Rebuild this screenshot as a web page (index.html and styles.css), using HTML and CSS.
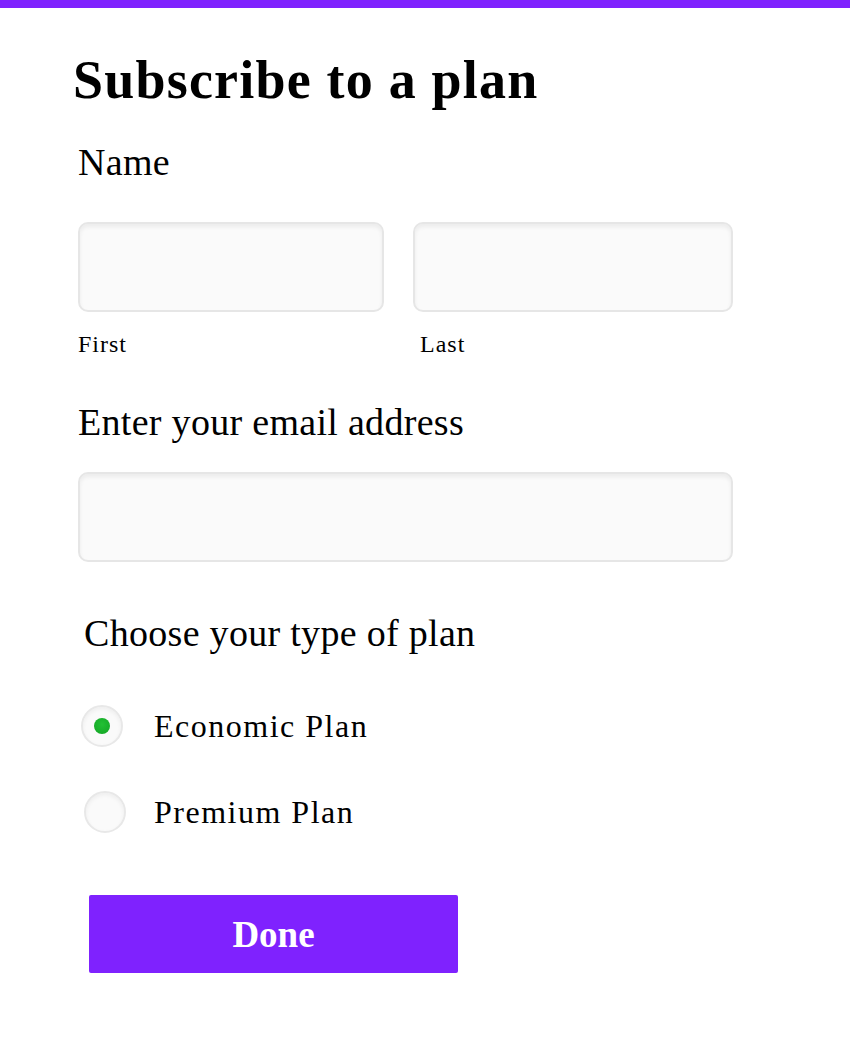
FILE: index.html
```html
<!DOCTYPE html>
<html lang="en">
<head>
	<meta charset="UTF-8">
	<title>Subscribe to a plan</title>
	<link rel="stylesheet" href="styles.css">
</head>
<body>
	<div class="topBar"></div>
	<form class="planForm">
		<h1 class="title">Subscribe to a plan</h1>
		<div class="label">Name</div>
		<div class="nameRow">
			<div class="nameField first">
				<input class="textInput" type="text">
				<span class="subLabel">First</span>
			</div>
			<div class="nameField last">
				<input class="textInput" type="text">
				<span class="subLabel">Last</span>
			</div>
		</div>
		<div class="label emailLabel">Enter your email address</div>
		<input class="textInput emailInput" type="email">

		<div class="label planLabel">Choose your type of plan</div>
		<label class="radioRow">
			<span class="radio checked"></span>
			<span class="radioText">Economic Plan</span>
		</label>
		<label class="radioRow second">
			<span class="radio"></span>
			<span class="radioText">Premium Plan</span>
		</label>

		<button class="doneBtn" type="button">Done</button>
	</form>
</body>
</html>
```

FILE: styles.css
```css
html,body{margin:0px;padding:0px;}
body{
	background-color: #fff;
	font-family: "Liberation Serif", "Times New Roman", serif;
	color: #000;
}
.topBar{
	height: 8px;
	background-color: #7f22fe;
}
.planForm{
	padding: 0 0 40px 78px;
}
.title{
	margin: 0;
	padding-top: 40px;
	margin-left: -5px;
	font-size: 54px;
	line-height: 64px;
	font-weight: bold;
	letter-spacing: 1.2px;
}
.label{
	font-size: 38px;
	line-height: 44px;
	letter-spacing: 0.3px;
}
.title + .label{
	margin-top: 28px;
}
.nameRow{
	display: flex;
	margin-top: 38px;
}
.nameField{
	display: flex;
	flex-direction: column;
}
.nameField.first{
	width: 306px;
	margin-right: 29px;
}
.nameField.last{
	width: 320px;
}
.textInput{
	box-sizing: border-box;
	display: block;
	width: 100%;
	height: 90px;
	border: 2px solid #e6e6e6;
	border-radius: 10px;
	background-color: #fafafa;
	box-shadow: inset 0 3px 4px rgba(0,0,0,0.06);
	outline: none;
}
.subLabel{
	font-size: 24px;
	line-height: 28px;
	margin-top: 18px;
	letter-spacing: 1px;
}
.last .subLabel{
	padding-left: 7px;
}
.emailLabel{
	margin-top: 42px;
}
.emailInput{
	width: 655px;
	margin-top: 28px;
}
.planLabel{
	margin-top: 49px;
	margin-left: 6px;
}
.radioRow{
	display: flex;
	align-items: center;
	margin-top: 50px;
	margin-left: 3px;
}
.radioRow.second{
	margin-top: 44px;
	margin-left: 6px;
}
.radio{
	box-sizing: border-box;
	width: 42px;
	height: 42px;
	border: 2px solid #e8e8e8;
	border-radius: 50%;
	background-color: #fafafa;
	box-shadow: inset 0 2px 4px rgba(0,0,0,0.05);
	display: flex;
	align-items: center;
	justify-content: center;
}
.radio.checked::after{
	content: "";
	width: 16px;
	height: 16px;
	border-radius: 50%;
	background: radial-gradient(circle at 50% 40%, #22c034, #12a424);
}
.radioText{
	font-size: 32px;
	letter-spacing: 1.5px;
	margin-left: 31px;
}
.second .radioText{
	margin-left: 28px;
}
.doneBtn{
	display: block;
	width: 369px;
	height: 78px;
	margin-top: 62px;
	margin-left: 11px;
	border: 0;
	border-radius: 2px;
	background-color: #7f22fe;
	color: #fff;
	font-family: "Liberation Serif", "Times New Roman", serif;
	font-size: 37px;
	font-weight: bold;
}
```
